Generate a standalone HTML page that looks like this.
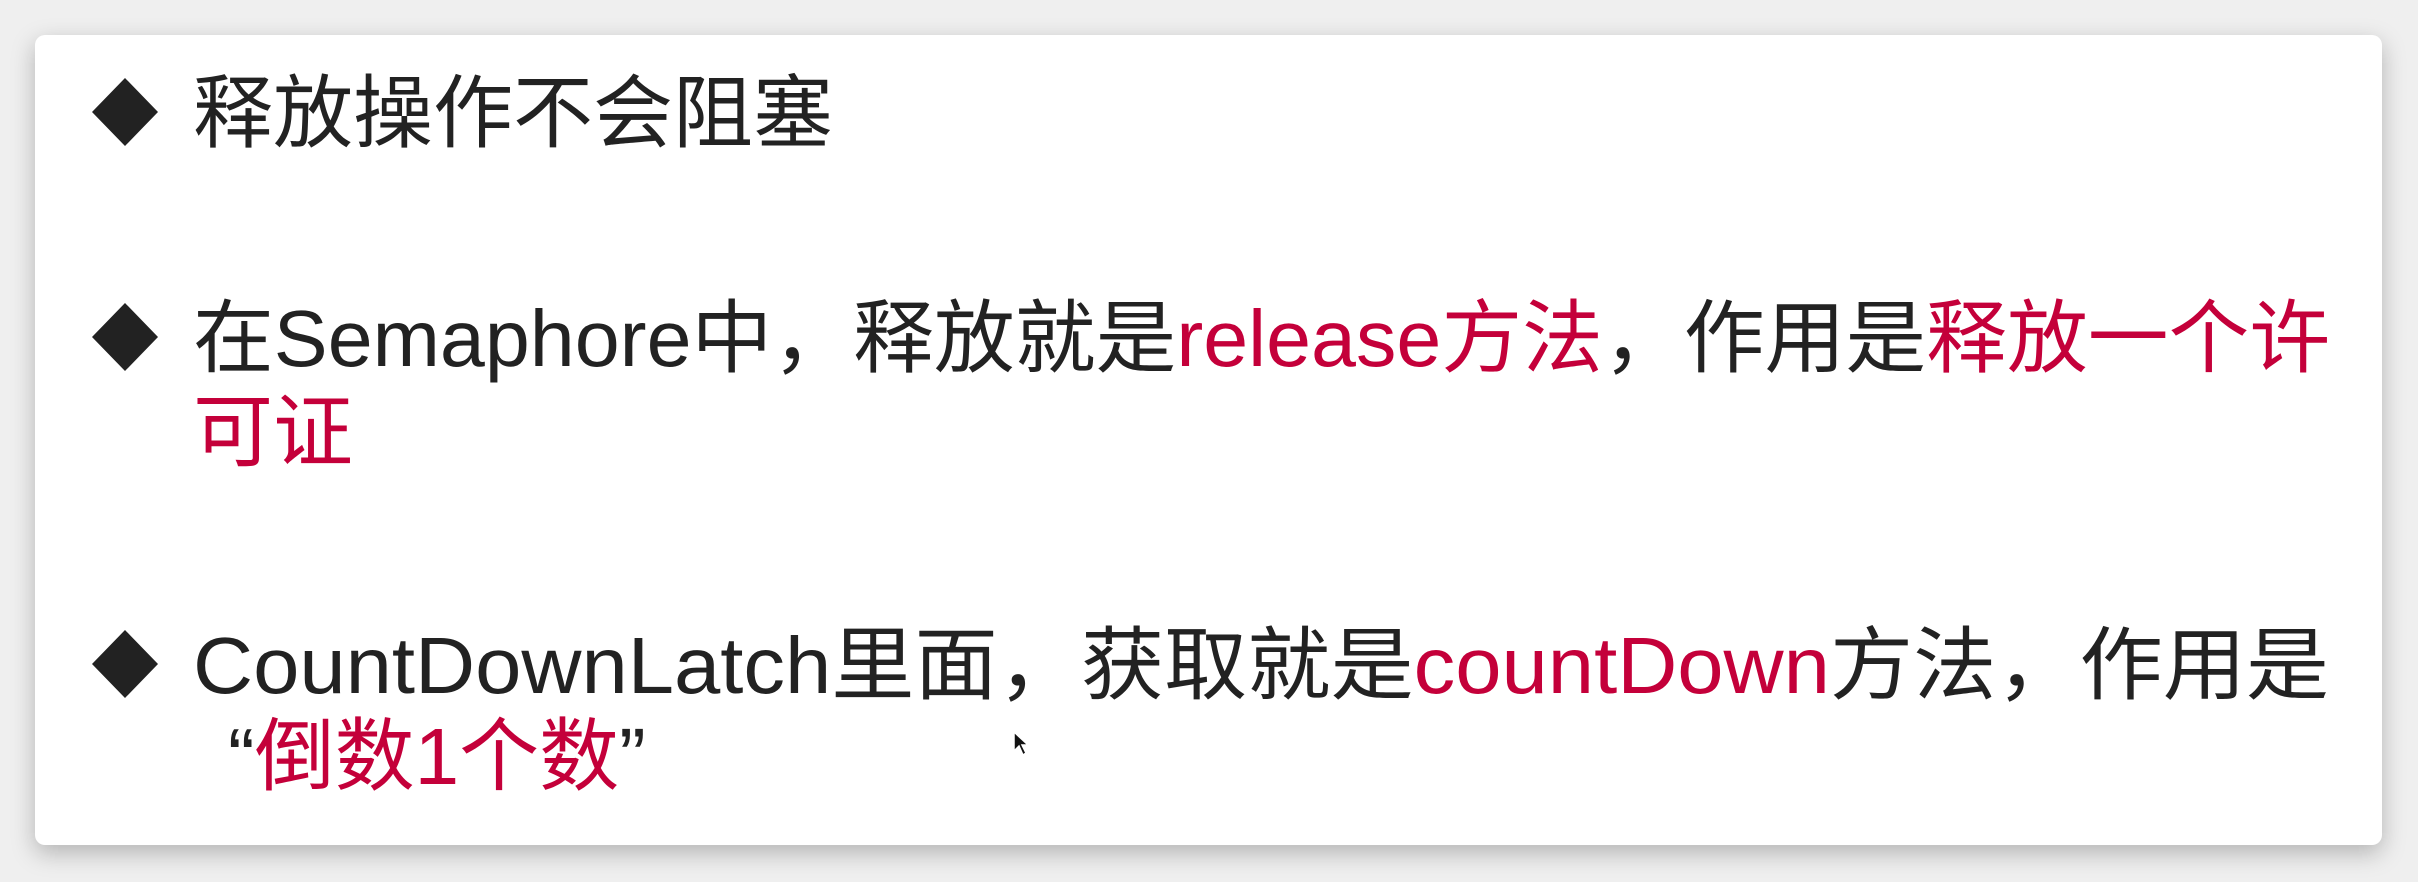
<!DOCTYPE html>
<html><head><meta charset="utf-8"><style>
html,body{margin:0;padding:0;}
body{width:2418px;height:882px;background:#efefef;position:relative;overflow:hidden;font-family:"Liberation Sans","Noto Sans CJK SC",sans-serif;}
.card{position:absolute;left:35px;top:35px;width:2347px;height:810px;background:#fff;border-radius:10px;box-shadow:0 8px 24px rgba(0,0,0,0.25);}
.l{position:absolute;left:193px;font-size:80px;color:#222;white-space:nowrap;line-height:1;transform-origin:left center;}
.r{color:#c4003a;}
.d{position:absolute;left:92px;}
</style></head><body>
<div class="card"></div>
<svg class="d" style="top:78px" width="66" height="68" viewBox="0 0 66 68"><polygon points="33,0 66,34 33,68 0,34" fill="#222"/></svg>
<div class="l" style="top:74px">释放操作不会阻塞</div>
<svg class="d" style="top:303px" width="66" height="68" viewBox="0 0 66 68"><polygon points="33,0 66,34 33,68 0,34" fill="#222"/></svg>
<div class="l" style="top:299px;transform:scaleX(1.01)">在Semaphore中，释放就是<span class="r">release方法</span>，作用是<span class="r">释放一个许</span></div>
<div class="l r" style="top:393px">可证</div>
<svg class="d" style="top:630px" width="66" height="68" viewBox="0 0 66 68"><polygon points="33,0 66,34 33,68 0,34" fill="#222"/></svg>
<div class="l" style="top:626px;transform:scaleX(1.04)">CountDownLatch里面，获取就是<span class="r">countDown</span>方法，作用是</div>
<div class="l" style="top:717px;left:228px">“<span class="r">倒数1个数</span>”</div>
<svg style="position:absolute;left:1013px;top:731px" width="16" height="26" viewBox="0 0 16 26"><path d="M1 1 L1 20 L6 15 L10 24 L13 22 L9 14 L15 14 Z" fill="#111" stroke="#fff" stroke-width="1.5"/></svg>
</body></html>
